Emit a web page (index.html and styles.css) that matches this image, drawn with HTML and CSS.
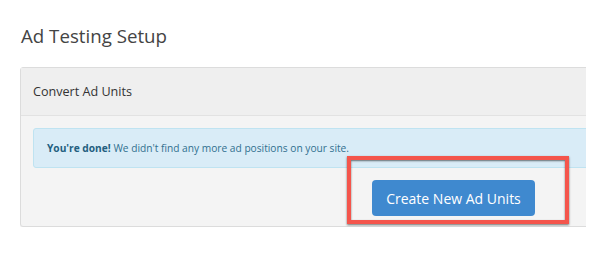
FILE: index.html
```html
<!DOCTYPE html>
<html>
<head>
<meta charset="utf-8">
<link rel="stylesheet" href="styles.css">
</head>
<body>
<div class="page">
  <h1 class="title">Ad Testing Setup</h1>
  <div class="clip">
    <div class="panel">
      <div class="panel-head">Convert Ad Units</div>
      <div class="panel-body">
        <div class="alert"><strong>You're done!</strong> We didn't find any more ad positions on your site.</div>
        <div class="actions">
          <button class="btn">Create New Ad Units</button>
          <span class="highlight"></span>
        </div>
      </div>
    </div>
  </div>
</div>
</body>
</html>
```
FILE: styles.css
```css
html, body {
  margin: 0;
  padding: 0;
  background: #fff;
}
body {
  font-family: "Open Sans", "DejaVu Sans", sans-serif;
  color: #333;
}
.page {
  padding: 23px 0 0 20px;
}
.title {
  margin: 0 0 0 1px;
  font-size: 18.7px;
  font-weight: 400;
  line-height: 26px;
  color: #444;
}
.clip {
  margin-top: 18px;
  width: 566px;
  overflow: hidden;
}
.panel {
  width: 900px;
  border: 1px solid #dcdcdc;
  border-radius: 3px;
  background: #f4f4f4;
  box-shadow: 0 1px 1px rgba(0,0,0,0.06);
}
.panel-head {
  height: 48px;
  box-sizing: border-box;
  padding: 0 12px;
  display: flex;
  align-items: center;
  font-size: 12.6px;
  color: #333;
  background: #efefef;
  border-bottom: 1px solid #e2e2e2;
}
.panel-body {
  padding: 12px 0 10px 12px;
}
.alert {
  height: 40px;
  box-sizing: border-box;
  border: 1px solid #bfe3f1;
  border-radius: 3px;
  background: #d9ecf7;
  color: #31708f;
  font-size: 10.2px;
  display: flex;
  align-items: center;
  padding: 0 13px;
  white-space: pre;
}
.alert strong {
  font-weight: 700;
  color: #245f80;
}
.actions {
  position: relative;
  margin-top: 12px;
  padding-left: 339px;
  height: 36px;
}
.btn {
  width: 163px;
  height: 36px;
  border: none;
  border-radius: 4px;
  background: #3f89cf;
  color: #fff;
  font-family: "Open Sans", "DejaVu Sans", sans-serif;
  font-size: 14px;
  padding: 0;
}
.highlight {
  position: absolute;
  left: 314px;
  top: -24px;
  width: 222px;
  height: 68px;
  box-sizing: border-box;
  border: 4px solid #f4554c;
  box-shadow: 0 1px 2px rgba(0,0,0,0.55), inset 0 1px 2px rgba(0,0,0,0.55);
}
```
